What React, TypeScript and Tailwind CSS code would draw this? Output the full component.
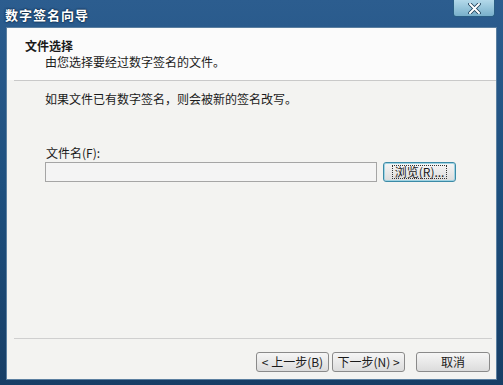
const FONT = { fontFamily: '"Noto Sans CJK SC", "Liberation Sans", sans-serif' }

function WinButton({ children, focused = false, w = 'w-[73px]' }: { children: React.ReactNode; focused?: boolean; w?: string }) {
  return (
    <div
      className={`${w} h-[20px] rounded-[3px] border flex items-center justify-center text-[12px] leading-none bg-gradient-to-b from-[#f6f6f6] to-[#dcdcdc] ${
        focused ? 'border-[#3c8aa6] shadow-[inset_0_0_0_1px_#9fd3e3]' : 'border-[#8a8a8a]'
      }`}
    >
      <span className={focused ? 'outline-1 outline-dotted outline-[#333] px-[2px]' : ''}>{children}</span>
    </div>
  )
}

export default function App() {
  return (
    <div
      className="w-[503px] h-[385px] flex flex-col bg-gradient-to-b from-[#2c5d8f] via-[#1d4f7e] to-[#173e66] text-[#1a1a1a]"
      style={FONT}
    >
      {/* Title bar */}
      <div className="h-[27px] shrink-0 flex items-start justify-between pl-[5px] pr-[8px]">
        <span className="mt-[8px] text-[13px] leading-none text-white font-bold tracking-[1px] [text-shadow:0_0_2px_#0a2440,0_0_2px_#0a2440]">
          数字签名向导
        </span>
        <div className="w-[42px] h-[17px] rounded-b-[3px] border border-t-0 border-[#2a5f85] bg-gradient-to-b from-[#b3d9ea] to-[#78b0cb] flex items-center justify-center">
          <svg width="13" height="11" viewBox="0 0 13 11">
            <path d="M2 1 L11 10 M11 1 L2 10" stroke="#1b3c55" strokeWidth="3.6" strokeLinecap="round" />
            <path d="M2 1 L11 10 M11 1 L2 10" stroke="#fff" strokeWidth="2" strokeLinecap="round" />
          </svg>
        </div>
      </div>

      {/* Client area */}
      <div className="flex-1 mx-[6px] mb-[5px] flex flex-col bg-[#f3f3f1] border border-[#5b7fa0]">
        {/* Header */}
        <div className="h-[52px] shrink-0 bg-[#fbfbfb] pl-[18px] pt-[10px] flex flex-col">
          <div className="text-[12px] font-bold leading-[16px]">文件选择</div>
          <div className="text-[12px] leading-[16px] pl-[20px]">由您选择要经过数字签名的文件。</div>
        </div>
        <div className="h-px shrink-0 ml-[7px] bg-[#c9c9c9]" />

        {/* Body */}
        <div className="flex-1 flex flex-col pl-[38px] pr-[40px]">
          <div className="text-[12px] leading-[16px] mt-[10px]">如果文件已有数字签名，则会被新的签名改写。</div>
          <div className="text-[12px] leading-[16px] mt-[38px] pl-[1px]">文件名(F):</div>
          <div className="flex items-center gap-[6px] mt-[1px]">
            <div className="w-[333px] h-[20px] border border-[#a5a5a5] bg-[#f4f4f4]" />
            <WinButton focused>浏览(R)...</WinButton>
          </div>
        </div>

        {/* Footer */}
        <div className="h-px shrink-0 ml-[7px] mr-[4px] bg-[#cfcfcf]" />
        <div className="shrink-0 h-[40px] flex items-start justify-end pt-[13px] pr-[6px]">
          <WinButton>&lt; 上一步(B)</WinButton>
          <div className="w-[3px]" />
          <WinButton>下一步(N) &gt;</WinButton>
          <div className="w-[11px]" />
          <WinButton w="w-[74px]">取消</WinButton>
        </div>
      </div>
    </div>
  )
}
